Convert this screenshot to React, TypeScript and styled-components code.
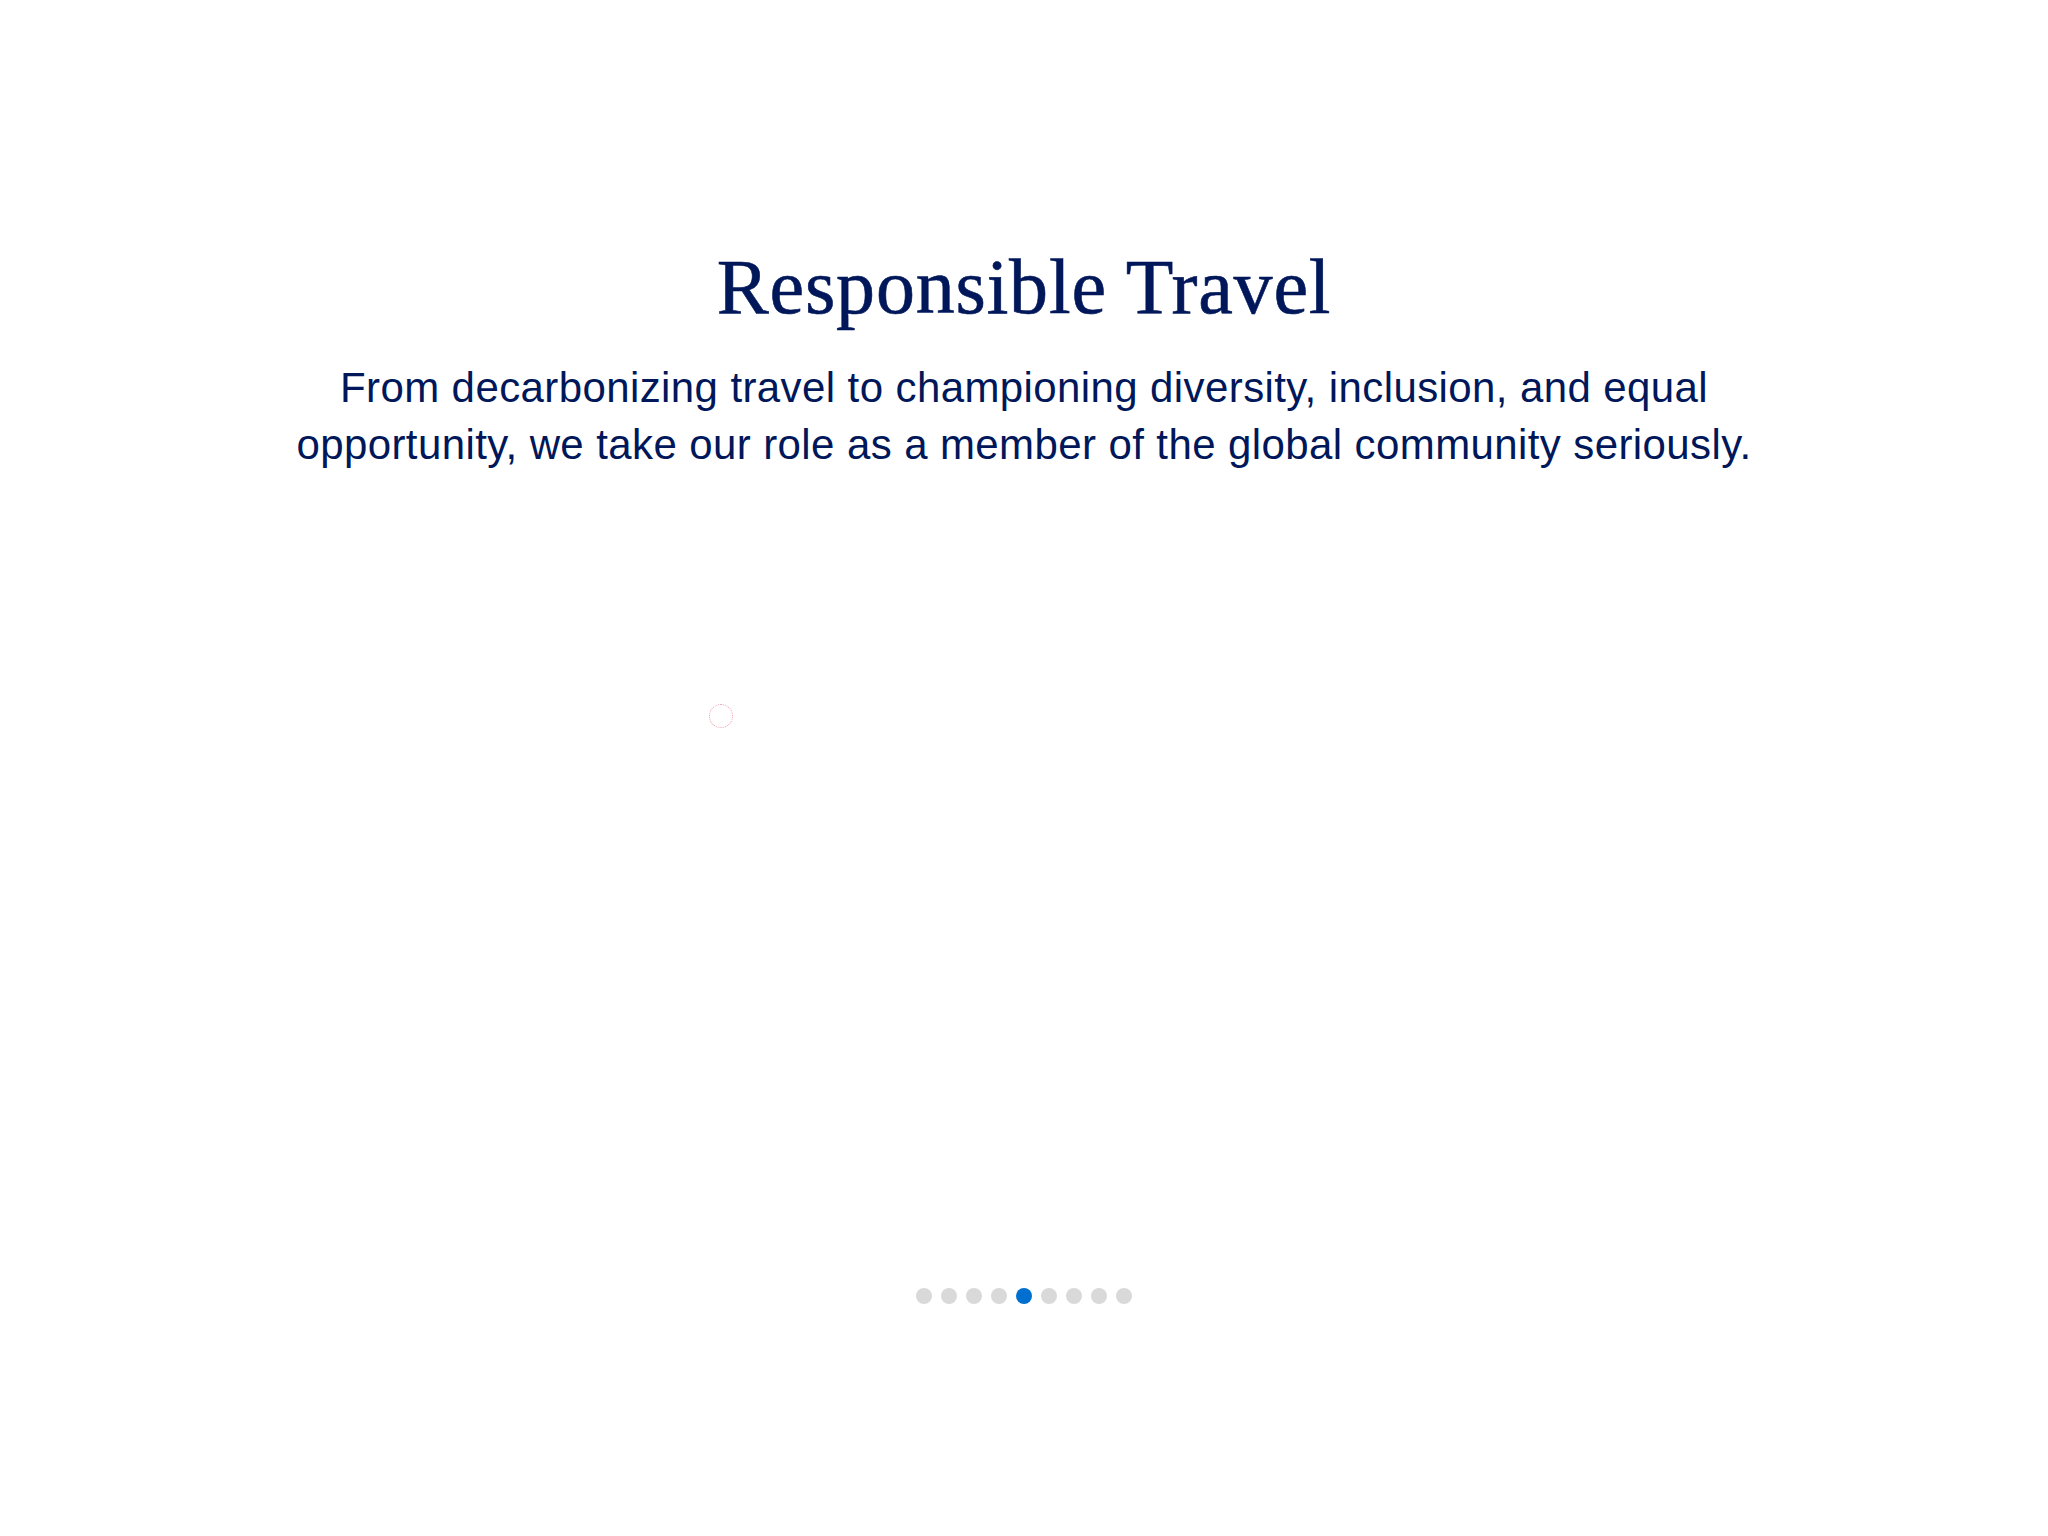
import React from "react";
import styled, { createGlobalStyle, keyframes } from "styled-components";

const GlobalStyle = createGlobalStyle`
  html, body {
    margin: 0;
    padding: 0;
    background: #ffffff;
  }
  body {
    font-family: "Liberation Sans", Arial, sans-serif;
  }
`;

const Page = styled.main`
  display: flex;
  flex-direction: column;
  align-items: center;
  padding-top: 240px;
  min-height: 1536px;
  box-sizing: border-box;
`;

const Title = styled.h1`
  margin: 0;
  font-family: "Liberation Serif", "Times New Roman", serif;
  font-weight: 400;
  font-size: 78px;
  line-height: 93.6px;
  color: #00175a;
  text-align: center;
  letter-spacing: 0.8px;
  -webkit-text-stroke: 0.6px #00175a;
`;

const Lead = styled.p`
  margin: 25px 0 0;
  font-family: "Liberation Sans", Arial, sans-serif;
  font-size: 42px;
  line-height: 57px;
  color: #00175a;
  text-align: center;
  letter-spacing: 0.4px;
`;

const Track = styled.section`
  display: flex;
  justify-content: center;
  gap: 23px;
  margin-top: 40px;
`;

const Slide = styled.div`
  position: relative;
  width: 280px;
  height: 406px;
`;

const spin = keyframes`
  to { transform: rotate(360deg); }
`;

const Spinner = styled.div`
  position: absolute;
  left: 50%;
  top: 50%;
  width: 24px;
  height: 24px;
  margin: -12px 0 0 -12px;
  box-sizing: border-box;
  border-radius: 50%;
  border: 1px dotted #ee9fae;
  animation: ${spin} 1s linear infinite;
`;

const Dots = styled.div`
  display: flex;
  gap: 9px;
  margin-top: 369px;
`;

const Dot = styled.button<{ $active?: boolean }>`
  width: 16px;
  height: 16px;
  padding: 0;
  border: none;
  border-radius: 50%;
  background: ${(p) => (p.$active ? "#006fcf" : "#d9d9d9")};
  cursor: pointer;
`;

export default function App() {
  const slides = [0, 1, 2];
  const dots = Array.from({ length: 9 }, (_, i) => i);
  return (
    <>
      <GlobalStyle />
      <Page>
        <Title>Responsible Travel</Title>
        <Lead>
          From decarbonizing travel to championing diversity, inclusion, and equal
          <br />
          opportunity, we take our role as a member of the global community seriously.
        </Lead>
        <Track>
          {slides.map((s) => (
            <Slide key={s}>{s === 0 && <Spinner />}</Slide>
          ))}
        </Track>
        <Dots>
          {dots.map((d) => (
            <Dot key={d} $active={d === 4} aria-label={`Slide ${d + 1}`} />
          ))}
        </Dots>
      </Page>
    </>
  );
}
